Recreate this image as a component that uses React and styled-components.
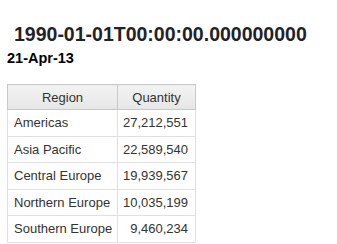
import React from 'react';
import styled, { createGlobalStyle } from 'styled-components';

const GlobalStyle = createGlobalStyle`
  body {
    margin: 0;
    background: #fff;
    font-family: "Liberation Sans", Arial, sans-serif;
  }
`;

const Page = styled.div`
  padding: 20px 0 0 7px;
`;

const Title = styled.h1`
  margin: 0 0 0 7px;
  font-size: 19.5px;
  line-height: 29px;
  font-weight: bold;
  color: #1f2328;
  white-space: nowrap;
`;

const SubTitle = styled.h2`
  margin: 1px 0 0;
  font-size: 14.5px;
  line-height: 16px;
  font-weight: bold;
  color: #000;
`;

const Table = styled.table`
  margin-top: 18px;
  width: 188px;
  table-layout: fixed;
  border-collapse: collapse;
  font-size: 13px;
  color: #333;
`;

const HeadCell = styled.th`
  box-sizing: border-box;
  height: 25px;
  padding: 0;
  font-weight: normal;
  text-align: center;
  white-space: nowrap;
  border: 1px solid #c8c8c8;
  background: linear-gradient(#f3f3f3, #e6e6e6);
  width: ${p => p.$w}px;
`;

const Cell = styled.td`
  height: 25.5px;
  padding: ${p => (p.$num ? '0 7px 0 4px' : '0 4px 0 6px')};
  white-space: nowrap;
  overflow: visible;
  border: 1px solid #e0e0e0;
  text-align: ${p => (p.$num ? 'right' : 'left')};
`;

const rows = [
  ['Americas', '27,212,551'],
  ['Asia Pacific', '22,589,540'],
  ['Central Europe', '19,939,567'],
  ['Northern Europe', '10,035,199'],
  ['Southern Europe', '9,460,234'],
];

export default function App() {
  return (
    <Page>
      <GlobalStyle />
      <Title>1990-01-01T00:00:00.000000000</Title>
      <SubTitle>21-Apr-13</SubTitle>
      <Table>
        <thead>
          <tr>
            <HeadCell $w={110}>Region</HeadCell>
            <HeadCell $w={78}>Quantity</HeadCell>
          </tr>
        </thead>
        <tbody>
          {rows.map(([region, qty]) => (
            <tr key={region}>
              <Cell>{region}</Cell>
              <Cell $num>{qty}</Cell>
            </tr>
          ))}
        </tbody>
      </Table>
    </Page>
  );
}
